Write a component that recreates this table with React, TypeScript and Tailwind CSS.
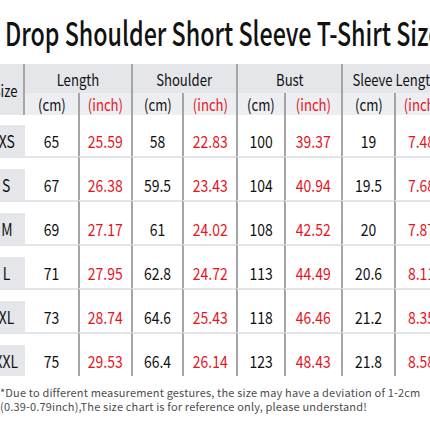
const rows = [
  { size: "XS", v: ["65", "25.59", "58", "22.83", "100", "39.37", "19", "7.48"] },
  { size: "S", v: ["67", "26.38", "59.5", "23.43", "104", "40.94", "19.5", "7.68"] },
  { size: "M", v: ["69", "27.17", "61", "24.02", "108", "42.52", "20", "7.87"] },
  { size: "L", v: ["71", "27.95", "62.8", "24.72", "113", "44.49", "20.6", "8.11"] },
  { size: "XL", v: ["73", "28.74", "64.6", "25.43", "118", "46.46", "21.2", "8.35"] },
  { size: "XXL", v: ["75", "29.53", "66.4", "26.14", "123", "48.43", "21.8", "8.58"] },
];

// cm / inch widths include the left divider in the data rows; hcm is the header cm width
const groups = [
  { label: "Length", cm: "w-[53px]", hcm: "w-[53px]", inch: "w-[53px]", first: true },
  { label: "Shoulder", cm: "w-[51px]", hcm: "w-[49px]", inch: "w-[54px]", first: false },
  { label: "Bust", cm: "w-[48px]", hcm: "w-[46px]", inch: "w-[57px]", first: false },
  { label: "Sleeve Length", cm: "w-[53px]", hcm: "w-[51px]", inch: "w-[53px]", first: false },
];

function T({ children }: { children: React.ReactNode }) {
  return <span className="inline-block whitespace-nowrap scale-x-[0.82]">{children}</span>;
}

export default function App() {
  return (
    <div className="w-[430px] h-[430px] overflow-hidden bg-white font-['Noto_Sans_CJK_SC',sans-serif]">
      {/* title */}
      <div className="h-[64px] pl-[5px] pt-[12px] text-[33px] leading-[40px] font-medium text-[#111] whitespace-nowrap">
        <span className="inline-block origin-left scale-x-[0.705]">Drop Shoulder Short Sleeve T-Shirt Size Chart</span>
      </div>

      <div className="ml-[-16px] w-[470px]">
        {/* header */}
        <div className="flex">
          <div className="w-[41px] h-[51px] shrink-0 pl-[3px] bg-[#e5e6ea] border-r-2 border-[#a5a5a5] flex items-center justify-center text-[16px] text-[#111]">
            <T>Size</T>
          </div>
          {groups.map((g) => (
            <div key={g.label} className={`flex flex-col shrink-0 ${g.first ? "" : "border-l-2 border-[#a5a5a5]"}`}>
              <div className="h-[29px] bg-[#e5e6ea] flex items-center justify-center text-[16px] text-[#111]">
                <T>{g.label}</T>
              </div>
              <div className="h-[22px] flex bg-[#eceef1] text-[16px]">
                <div className={`${g.hcm} flex items-center justify-center text-[#111]`}>
                  <T>(cm)</T>
                </div>
                <div className={`${g.inch} border-l-2 border-[#a5a5a5] flex items-center justify-center text-[#e6141e]`}>
                  <T>(inch)</T>
                </div>
              </div>
            </div>
          ))}
        </div>

        {/* data rows */}
        {rows.map((r, i) => (
          <div key={r.size} className={`flex ${i === 0 ? "h-[41px]" : "h-[44px]"}`}>
            <div className={`w-[41px] shrink-0 flex flex-col justify-end ${i === 0 ? "" : "border-t-2 border-[#e4e5e9]"}`}>
              <div className="h-[31px] pl-[4px] bg-[#e5e6ea] flex items-center justify-center text-[17px] text-[#111]">
                <T>{r.size}</T>
              </div>
            </div>
            {groups.map((g, gi) => (
              <div key={g.label} className="flex shrink-0">
                <div
                  className={`${g.cm} flex flex-col justify-end ${g.first ? "" : "border-l-2 border-l-[#a5a5a5]"} ${i === 0 ? "" : "border-t-2 border-t-[#e4e5e9]"}`}
                >
                  <div className="h-[31px] flex items-center justify-center text-[17px] text-[#111]">
                    <T>{r.v[gi * 2]}</T>
                  </div>
                </div>
                <div
                  className={`${g.inch} flex flex-col justify-end border-l-2 border-l-[#a5a5a5] ${i === 0 ? "" : "border-t-2 border-t-[#e4e5e9]"}`}
                >
                  <div className="h-[31px] flex items-center justify-center text-[17px] text-[#e6141e]">
                    <T>{r.v[gi * 2 + 1]}</T>
                  </div>
                </div>
              </div>
            ))}
          </div>
        ))}
      </div>

      {/* footnote */}
      <div className="mt-[9px] pl-0 text-[11px] leading-[14px] tracking-[0.17px] text-[#4d4d4d] whitespace-nowrap">
        *Due to different measurement gestures, the size may have a deviation of 1-2cm
        <br />
        (0.39-0.79inch),The size chart is for reference only, please understand!
      </div>
    </div>
  );
}
